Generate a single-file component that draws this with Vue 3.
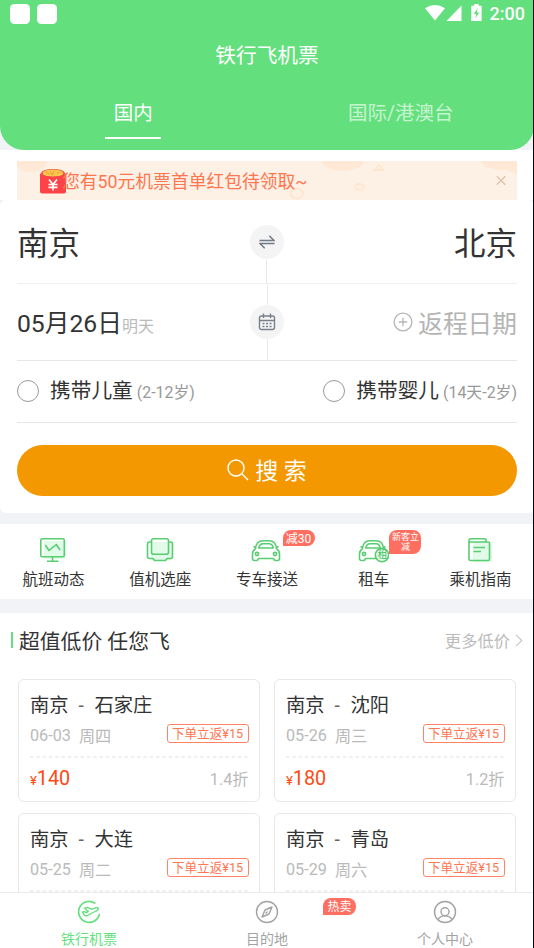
<script setup>
const services = [
  { name: '航班动态', icon: 'monitor' },
  { name: '值机选座', icon: 'seat' },
  { name: '专车接送', icon: 'car', tag: '减30' },
  { name: '租车', icon: 'rent', tag: '新客立减', wide: true },
  { name: '乘机指南', icon: 'guide' },
]
const deals = [
  { to: '石家庄', date: '06-03', day: '周四', price: 140, off: '1.4折' },
  { to: '沈阳', date: '05-26', day: '周三', price: 180, off: '1.2折' },
  { to: '大连', date: '05-25', day: '周二', price: 150, off: '1.3折' },
  { to: '青岛', date: '05-29', day: '周六', price: 160, off: '1.5折' },
]
const tabs = [
  { name: '铁行机票', icon: 'plane', active: true },
  { name: '目的地', icon: 'compass', tag: '热卖' },
  { name: '个人中心', icon: 'user' },
]
</script>

<template>
  <div class="screen">
    <header class="header">
      <div class="status">
        <i class="app-dot"></i><i class="app-dot"></i>
        <svg class="signals" width="58" height="18" viewBox="0 0 58 18">
          <path fill="#fff" d="M0 4.200Q10 -2.400 20 4.200L10 16.500ZM36.500 1.500V17H21.500ZM49.200 0h4.400v1.800h3V17H46.300V1.800h2.900Z" />
          <path fill="#63df7d" d="M52.600 4.200L48.700 10h2.500l-.8 4.400L54.300 8.600h-2.500Z" />
        </svg>
        <span class="clock">2:00</span>
      </div>
      <div class="title">铁行飞机票</div>
      <nav class="head-tabs">
        <span class="head-tab on">国内</span>
        <span class="head-tab">国际/港澳台</span>
      </nav>
    </header>

    <div class="banner-wrap">
      <div class="banner">
        <svg class="banner-art" width="500" height="39" viewBox="0 0 500 39">
          <g fill="#ffe8d5">
            <ellipse cx="14" cy="0" rx="16" ry="11" />
            <ellipse cx="326" cy="-2" rx="22" ry="12" />
            <path d="M463 0H500V13Q492 8 482 9Q468 8 463 0Z" />
          </g>
          <g fill="none" stroke="#ffe5cf" stroke-width="1.800">
            <ellipse cx="280" cy="32.500" rx="6" ry="5" />
            <ellipse cx="342.500" cy="26" rx="4.500" ry="3" />
            <path d="M362 4L366.500 9H357.500Z" />
          </g>
          <path d="M479.800 15.200l8.600 8.600M488.400 15.200l-8.600 8.600" stroke="#dfc3aa" stroke-width="1.300" />
        </svg>
        <svg class="packet" width="26" height="25" viewBox="0 0 26 25">
          <path d="M1 4Q3 0 13 0T25 4L24 8H2Z" fill="#e8453b" />
          <ellipse cx="13" cy="4.200" rx="10.500" ry="3.700" fill="#fbc64f" />
          <path d="M6 3l3 2M10 2l2 4 2-4M17 4l3-1" stroke="#f09a32" fill="none" />
          <path d="M0 4Q2 7.500 13 7.500T26 4V22.500Q26 24.500 24 24.500H2Q0 24.500 0 22.500Z" fill="#fc4448" />
          <path d="M9 10.500L13 15.500L17 10.500M13 15.500V21.500M8.500 15.500h9M8.500 18.300h9" fill="none" stroke="#fff" stroke-width="1.700" />
        </svg>
        <span class="banner-text">您有50元机票首单红包待领取~</span>
      </div>
    </div>

    <section class="search-card">
      <div class="row cities">
        <span>南京</span>
        <span class="round">
          <svg width="16" height="16" viewBox="0 0 16 16" fill="none" stroke="#727b86" stroke-width="1.500">
            <path d="M.5 6.500H15L10.300 1.800M15.500 9.500H1L5.700 14.200" />
          </svg>
        </span>
        <span>北京</span>
        <i class="stem low"></i>
      </div>
      <div class="row dates">
        <span class="depart">05月26日<small>明天</small></span>
        <span class="round">
          <svg width="18" height="18" viewBox="0 0 18 18" fill="none" stroke="#77808b" stroke-width="1.400">
            <rect x="1.500" y="3" width="15" height="13.500" rx="2" />
            <path d="M1.500 7.500h15M5.500 .5v4.500M12.500 .5v4.500" />
            <path d="M4.500 10.500h2M8 10.500h2M11.500 10.500h2M4.500 13.500h2M8 13.500h2M11.500 13.500h2" />
          </svg>
        </span>
        <span class="return">
          <svg width="20" height="20" viewBox="0 0 20 20" fill="none" stroke="#b5b5b5" stroke-width="1.300">
            <circle cx="10" cy="10" r="8.900" /><path d="M5.800 10h8.400M10 5.800v8.400" />
          </svg>
          <span>返程日期</span>
        </span>
        <i class="stem full"></i>
      </div>
      <div class="row kids">
        <span class="kid"><i class="radio"></i>携带儿童<small>(2-12岁)</small></span>
        <span class="kid"><i class="radio"></i>携带婴儿<small>(14天-2岁)</small></span>
      </div>
      <button class="search-btn">
        <svg width="22" height="22" viewBox="0 0 22 22" fill="none" stroke="#fff" stroke-width="1.400">
          <circle cx="9" cy="9" r="8" /><path d="M14.800 14.800L21 21" />
        </svg>
        <span>搜 索</span>
      </button>
    </section>

    <section class="services">
      <div v-for="s in services" :key="s.name" class="service">
        <svg class="svc-icon" width="32" height="28" viewBox="0 0 32 28" fill="none" stroke="#59cd72" stroke-width="1.600" stroke-linejoin="round">
          <template v-if="s.icon === 'monitor'">
            <rect x="7" y="5" width="22" height="18" fill="#e2fae8" stroke="none" />
            <rect x="3.800" y="2.800" width="23.500" height="18" rx="1.500" />
            <path d="M8.300 9L12 14.500L19.300 8.500L23 14M15.500 21v4M10 25.200h11.500" />
          </template>
          <template v-else-if="s.icon === 'seat'">
            <rect x="7" y="6" width="21" height="18" fill="#e2fae8" stroke="none" />
            <rect x="7.500" y="2.800" width="17" height="15.500" rx="2" />
            <path d="M7.500 6H5.300Q3.500 6 3.500 8V20.500Q3.500 22.500 5.500 22.500H9L10.500 24.500H21.500L23 22.500H26.500Q28.500 22.500 28.500 20.500V8Q28.500 6 26.700 6H24.500" />
          </template>
          <template v-else-if="s.icon === 'guide'">
            <path d="M9 6H28V26.500H9Z" fill="#e2fae8" stroke="none" />
            <rect x="5" y="6" width="20.500" height="18.500" rx="1.500" />
            <path d="M5 7V4.800Q5 2.800 7 2.800H21Q22 2.800 22 4V6M9.500 11.500H21M9.500 15.500H17" />
          </template>
          <template v-else>
            <path d="M5.500 13Q6 4.800 13 4.800H19Q26 4.800 26.500 13M3.500 10.500L5.500 11.500M28.500 10.500L26.500 11.500M8.800 12Q9.500 7.800 13 7.800H19Q22.500 7.800 23.200 12Z" />
            <path d="M5.500 13Q2.500 14.500 2.500 18V22.500Q2.500 24.500 4.500 24.500H6.500Q8 24.500 8.500 22.500H23.500Q24 24.500 25.500 24.500H27.500Q29.500 24.500 29.500 22.500V18Q29.500 14.500 26.500 13" />
            <circle cx="7" cy="18" r="1.600" /><circle cx="25" cy="18" r="1.600" />
            <circle v-if="s.icon === 'rent'" cx="25" cy="19" r="6.700" fill="#e2fae8" />
          </template>
        </svg>
        <span v-if="s.icon === 'rent'" class="rent-word">租</span>
        <span class="svc-name">{{ s.name }}</span>
        <span v-if="s.tag" class="tag" :class="{ wide: s.wide }">{{ s.tag }}</span>
      </div>
    </section>

    <section class="deals">
      <div class="deals-head">
        <i class="bar"></i>
        <h2>超值低价 任您飞</h2>
        <span class="more">更多低价</span>
        <svg width="8" height="13" viewBox="0 0 8 13" fill="none" stroke="#c4c4c4" stroke-width="1.100"><path d="M1 .8L6.800 6.500L1 12.200" /></svg>
      </div>
      <div class="grid">
        <article v-for="d in deals" :key="d.to" class="deal">
          <div class="route"><span>南京</span><i>-</i><span>{{ d.to }}</span></div>
          <div class="when"><span>{{ d.date }}</span><span class="day">{{ d.day }}</span><b>下单立返¥15</b></div>
          <svg class="dash" width="219" height="2"><path d="M0 1H219" stroke="#e2e2e2" stroke-width="1.200" stroke-dasharray="3.600 2.700" /></svg>
          <div class="cost"><span class="price"><small>¥</small>{{ d.price }}</span><span class="off">{{ d.off }}</span></div>
        </article>
      </div>
    </section>

    <nav class="tabbar">
      <div v-for="t in tabs" :key="t.name" class="tab" :class="{ active: t.active }">
        <svg width="24" height="24" viewBox="0 0 24 24" fill="none" stroke="currentColor" stroke-width="1.400" stroke-linejoin="round">
          <template v-if="t.icon === 'plane'">
            <path d="M17.800 3.100A10.500 10.500 0 1 0 22.300 14.500" stroke-width="1.700" stroke-linecap="round" />
            <path d="M5.500 12L7.300 11.600L9.300 12.500L11.300 11.500L7.500 8.300L10 7.300L15 9.200L18.500 7.800Q21.200 7.200 21.300 8.800Q21 10 19 11L10.500 15.500Q8.600 16.300 7.300 14.900Z" />
          </template>
          <template v-else-if="t.icon === 'compass'">
            <circle cx="12" cy="12" r="10.500" />
            <path d="M17 7L14 14L7 17L10 10ZM10.500 13.500L12.500 11.500" />
          </template>
          <template v-else>
            <circle cx="12" cy="12" r="10.500" />
            <circle cx="12" cy="11.800" r="4" />
            <path d="M5 19.700Q7 15.900 12 15.900T19 19.700" />
          </template>
        </svg>
        <span>{{ t.name }}</span>
        <b v-if="t.tag" class="tag hot">{{ t.tag }}</b>
      </div>
    </nav>
  </div>
</template>

<style>
body { margin: 0; background: #f2f3f7; }
</style>

<style scoped>
.screen {
  position: relative;
  width: 534px;
  height: 948px;
  overflow: hidden;
  display: flex;
  flex-direction: column;
  background: #f2f3f7;
  font-family: Roboto, "Noto Sans CJK SC", sans-serif;
  color: #333;
}
.screen::after {
  content: "";
  position: absolute;
  top: 0;
  right: 0;
  width: 1px;
  height: 100%;
  background: #05060c;
}
.screen * { box-sizing: border-box; }
.header {
  flex: none;
  height: 150px;
  background: #63df7d;
  border-radius: 0 0 24px 24px;
  color: #fff;
}
.status {
  height: 27px;
  display: flex;
  align-items: center;
  gap: 7px;
  padding: 0 9px 0 10px;
}
.app-dot { width: 20px; height: 20px; border-radius: 4.500px; background: #fff; }
.signals { margin: -2px 0 0 auto; }
.clock { font-size: 18px; font-weight: 500; line-height: 27px; }
.title { height: 54px; line-height: 58px; font-size: 20.700px; text-align: center; }
.head-tabs { display: flex; height: 58px; }
.head-tab {
  flex: 1;
  display: flex;
  flex-direction: column;
  align-items: center;
  font-size: 19.500px;
  line-height: 65px;
  color: rgba(255, 255, 255, .65);
}
.head-tab:first-child { padding-right: 1px; }
.on { color: #fff; }
.on::after { content: ""; width: 56px; height: 2px; margin-top: -9px; background: #fff; }
.banner-wrap { flex: none; height: 50px; padding: 11px 17px 0; background: #fff; }
.banner {
  position: relative;
  height: 39px;
  display: flex;
  align-items: center;
  padding-left: 23px;
  background: #fdf1e5;
}
.banner-art { position: absolute; inset: 0; }
.packet { position: relative; flex: none; margin-top: 1px; }
.banner-text { position: relative; margin-left: -4px; padding-top: 2px; font-size: 17.800px; line-height: 39px; color: #fd7650; white-space: nowrap; }
.search-card {
  flex: none;
  height: 312.500px;
  padding: 0 17px;
  background: #fff;
  border-radius: 6px;
}
.row {
  position: relative;
  display: flex;
  justify-content: space-between;
  align-items: center;
  border-bottom: 1px solid #e6e6e6;
}
.round {
  position: absolute;
  left: 233px;
  width: 34px;
  height: 34px;
  border-radius: 50%;
  background: #f4f4f4;
  display: flex;
  align-items: center;
  justify-content: center;
  z-index: 1;
}
.stem { position: absolute; left: 249px; width: 1px; background: #e8e8e8; }
.low { top: 60px; bottom: 0; }
.full { top: 0; bottom: 0; left: 250px; }
.cities { height: 84px; font-size: 31.500px; line-height: 84px; border-color: #f0f0f0; }
.cities > span:not(.round) { padding-top: 7px; }
.dates { height: 77px; font-size: 24.700px; line-height: 76px; }
.depart { padding-top: 6px; }
.return > span { padding-top: 5px; }
.depart small { font-size: 16px; color: #bbb; }
.return { display: flex; align-items: center; gap: 5px; color: #b5b5b5; }
.kids { height: 62px; font-size: 20.700px; line-height: 63px; }
.kid { display: flex; align-items: center; }
.kid small { margin-left: 4px; padding-top: 1px; font-size: 15.900px; color: #999; }
.radio { width: 22px; height: 22px; margin: -2px 11px 0 0; border: 1px solid #999; border-radius: 50%; }
.search-btn {
  display: flex;
  align-items: center;
  justify-content: center;
  gap: 6px;
  width: 100%;
  height: 50.500px;
  margin-top: 22px;
  padding: 0;
  border: 0;
  border-radius: 26px;
  background: #f39800;
  color: #fff;
  font: 23px/50px Roboto, "Noto Sans CJK SC", sans-serif;
}
.search-btn span { padding-top: 4px; }
.services { flex: none; display: flex; height: 75.500px; margin-top: 11px; background: #fff; }
.service { position: relative; flex: 1; display: flex; flex-direction: column; align-items: center; padding-top: 11px; }
.svc-icon { flex: none; margin: 1px 1px 0 0; }
.svc-name { margin-top: 2px; font-size: 15.500px; line-height: 28px; }
.rent-word { position: absolute; top: 25px; left: 57px; font-size: 10px; line-height: 12px; color: #45bd60; }
.tag {
  position: absolute;
  top: 6px;
  left: 69px;
  min-width: 32px;
  height: 16.500px;
  border-radius: 8px 8px 8px 0;
  background: #ff6f61;
  color: #fff;
  font-size: 12px;
  font-weight: 400;
  line-height: 18px;
  text-align: center;
}
.wide { width: 32px; height: 24px; font-size: 9px; line-height: 10.500px; padding-top: 2px; }
.deals { flex: none; margin-top: 13.500px; background: #fff; }
.deals-head { display: flex; align-items: center; height: 55px; padding: 0 11px; }
.bar { width: 2px; height: 16px; background: #63df7d; }
h2 { margin: 0 auto 0 6px; padding-top: 3px; font-size: 20.800px; font-weight: 400; line-height: 52px; }
.more { margin-right: 5px; font-size: 16.300px; color: #bababa; }
.grid { display: grid; grid-template-columns: 242px 242px; gap: 11px 14px; padding: 11px 18px; }
.deal { height: 123px; border: 1px solid #e8e8e8; border-radius: 6px; padding: 9px 10.500px 0 11px; }
.route { display: flex; height: 31px; font-size: 19.300px; line-height: 33px; }
.route i { width: 26px; padding-right: 1px; text-align: center; font-style: normal; color: #666; }
.when { display: flex; align-items: center; gap: 8px; height: 30px; font-size: 16.200px; color: #bababa; }
.when span:first-child { margin-top: 1px; }
.when b {
  margin-left: auto;
  width: 82px;
  height: 19px;
  margin-top: -2px;
  border: 1px solid #ff8465;
  border-radius: 3px;
  font-size: 12.600px;
  font-weight: 400;
  line-height: 18px;
  text-align: center;
  color: #ff7653;
  white-space: nowrap;
}
.dash { display: block; margin-top: 6.500px; }
.cost { display: flex; justify-content: space-between; align-items: center; height: 40.500px; }
.price { padding-top: 1px; color: #ff4a12; font-size: 19.800px; }
.price small { font-size: 13px; }
.off { font-size: 16.200px; color: #bababa; }
.tabbar {
  position: absolute;
  left: 0;
  right: 0;
  bottom: 0;
  height: 56px;
  display: flex;
  background: #fff;
  border-top: 1px solid #ebebeb;
}
.tab { position: relative; flex: 1; display: flex; flex-direction: column; align-items: center; padding-top: 7px; color: #a3a3a3; font-size: 14px; line-height: 30px; }
.tab svg { flex: none; }
.active { color: #63df7d; }
.hot { top: 5px; left: 145px; width: 33px; }
</style>
